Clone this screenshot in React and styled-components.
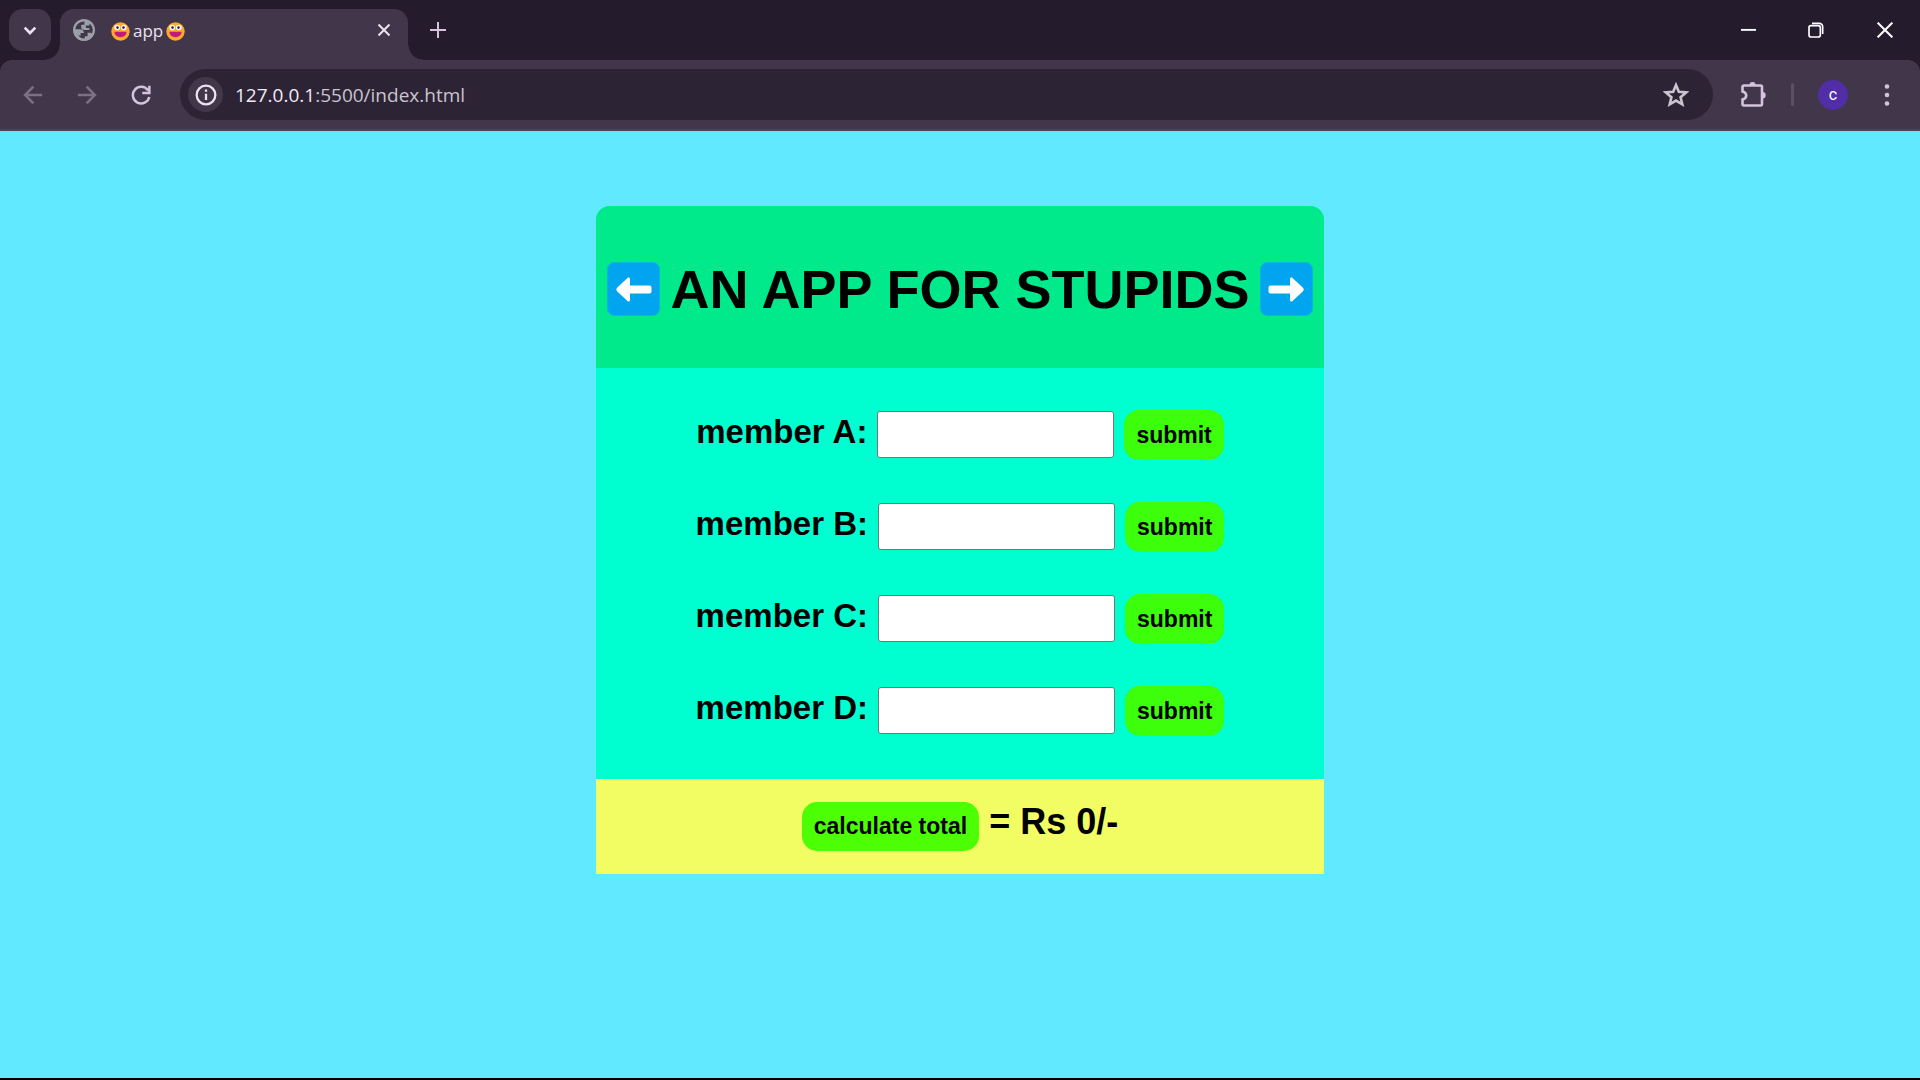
import React, { useState } from "react";
import styled, { createGlobalStyle } from "styled-components";

const GlobalStyle = createGlobalStyle`
  *, *::before, *::after { box-sizing: border-box; }
  html, body { margin: 0; height: 100%; }
  body { font-family: "Liberation Sans", Arial, sans-serif; background: #000; overflow: hidden; }
  button { border: 0; padding: 0; margin: 0; background: none; color: inherit; font: inherit; cursor: pointer; }
  svg { display: block; }
`;

const Window = styled.div`
  display: flex;
  flex-direction: column;
  height: 100vh;
  padding-bottom: 2px;
`;

const TabStrip = styled.header`
  display: flex;
  align-items: flex-start;
  height: 60px;
  padding: 9px 0 0 9px;
  background: #241b2d;
  color: #fff;
`;

const IconButton = styled.button`
  display: grid;
  place-items: center;
  flex: none;
  width: ${(p) => p.$width || 42}px;
  height: 42px;
  border-radius: 14px;
  background: ${(p) => p.$fill || "transparent"};
  color: ${(p) => p.$color || "#d3c3dc"};
`;

const Tab = styled.div`
  position: relative;
  display: flex;
  align-items: center;
  width: 348px;
  height: 51px;
  margin: 0 9px;
  padding: 0 3px 9px 13px;
  border-radius: 14px 14px 0 0;
  background: #42374a;
  &::before, &::after {
    content: "";
    position: absolute;
    bottom: 0;
    width: 15px;
    height: 15px;
  }
  &::before { right: 100%; background: radial-gradient(circle at 0 0, transparent 14px, #42374a 15px); }
  &::after { left: 100%; background: radial-gradient(circle at 100% 0, transparent 14px, #42374a 15px); }
`;

const TabTitle = styled.span`
  display: flex;
  flex: 1;
  align-items: center;
  gap: 3px;
  padding: 2px 0 0 16px;
  font: 17px/24px "Open Sans", "Noto Sans", sans-serif;
  color: #ebe2ef;
`;

const WindowControls = styled.div`
  display: flex;
  margin-left: auto;
  padding-right: 1px;
`;

const ToolbarBack = styled.div`
  background: #241b2d;
`;

const Toolbar = styled.nav`
  display: flex;
  align-items: center;
  gap: 12px;
  height: 71px;
  padding: 0 12px;
  border-bottom: 2px solid #4b444f;
  border-radius: 12px 12px 0 0;
  background: #42374a;
`;

const AddressBar = styled.div`
  display: flex;
  flex: 1;
  align-items: center;
  height: 51px;
  margin: 0 8px 0 6px;
  padding: 0 16px 0 8px;
  border-radius: 26px;
  background: #2c2335;
`;

const SiteInfo = styled.button`
  display: grid;
  place-items: center;
  flex: none;
  width: 35px;
  height: 35px;
  border-radius: 50%;
  background: #42374a;
  color: #ebe2ef;
`;

const Address = styled.a`
  flex: 1;
  padding-left: 12px;
  font: 19px/28px "Open Sans", "Noto Sans", sans-serif;
  color: #cbc4ce;
  text-decoration: none;
  strong { font-weight: 400; color: #f1e9f5; }
`;

const Divider = styled.span`
  width: 3px;
  height: 23px;
  margin: 0 12px 0 6px;
  border-radius: 2px;
  background: #5c5068;
`;

const Avatar = styled.button`
  width: 30px;
  height: 30px;
  margin-right: 6px;
  border-radius: 50%;
  background: #512da8;
  color: #fff;
  font: 400 16px/30px Roboto, sans-serif;
`;

const Page = styled.main`
  display: flex;
  flex: 1;
  align-items: flex-start;
  justify-content: center;
  padding-top: 75px;
  background: #61eaff;
`;

const Card = styled.section`
  width: 728px;
  overflow: hidden;
  border-radius: 14px 14px 0 0;
  background: #00ffd0;
  color: #000;
`;

const CardHeader = styled.div`
  display: flex;
  align-items: center;
  justify-content: space-between;
  padding: 52px 11px 48px;
  background: #00e98b;
`;

const Title = styled.h1`
  margin: 0;
  font-size: 54px;
  line-height: 62px;
  white-space: nowrap;
`;

const Members = styled.div`
  display: flex;
  flex-direction: column;
  gap: 42px;
  padding: 42px 0 43px;
`;

const MemberRow = styled.form`
  display: flex;
  align-items: flex-start;
  justify-content: center;
  gap: 10px;
`;

const MemberLabel = styled.label`
  font-size: 33px;
  font-weight: 700;
  line-height: 44px;
`;

const MemberInput = styled.input`
  width: 237px;
  height: 47px;
  margin: 1px 0 0;
  padding: 2px 6px;
  border: 1px solid #767676;
  border-radius: 3px;
  background: #fff;
  font: 24px "Liberation Sans", Arial, sans-serif;
`;

const PillButton = styled.button`
  height: 49px;
  padding: 0 12px;
  border-radius: 15px;
  background: ${(p) => p.$fill};
  color: #000;
  font-size: 23px;
  font-weight: 700;
  ${MemberRow} & { height: 50px; }
`;

const TotalBar = styled.div`
  display: flex;
  align-items: flex-start;
  justify-content: center;
  gap: 10px;
  padding: 23px 0;
  background: #f1fd63;
`;

const Total = styled.output`
  font-size: 36px;
  font-weight: 700;
  line-height: 40px;
`;

const Stroke = ({ size = 24, width = 2, children }) => (
  <svg width={size} height={size} viewBox="0 0 24 24" fill="none" stroke="currentColor" strokeWidth={width} aria-hidden="true">
    {children}
  </svg>
);

const Grin = () => (
  <svg width="19" height="19" viewBox="0 0 19 19" aria-hidden="true">
    <circle cx="9.5" cy="9.5" r="9.2" fill="#ffa82b" />
    <path d="M3.5 9.800h12c0 3.400-2.600 5.400-6 5.400s-6-2-6-5.400z" fill="#bf1b7c" />
    <circle cx="6.200" cy="5.500" r="2.800" fill="#fff" />
    <circle cx="12.800" cy="5.500" r="2.800" fill="#fff" />
    <circle cx="6.500" cy="5.600" r="1.300" fill="#33233c" />
    <circle cx="12.500" cy="5.600" r="1.300" fill="#33233c" />
  </svg>
);

const Globe = () => (
  <svg width="22" height="22" viewBox="0 0 22 22" aria-hidden="true">
    <circle cx="11" cy="11" r="10.800" fill="#9aa0a6" />
    <path
      d="M11.500 2.200C6.500 2 2.400 5.800 2.200 10.300h4.500c2.600 0 4.300 1.400 4.300 3.700h-3.400v2.400H5.300c1.600 2 3.900 3.300 6.500 3.100v-2.300h2.800v-3.400h2.200c1.400 0 2.300.6 2.700 1.200 1.600-4.100 0-8.200-2.800-10.400l-.5 2h-3.300v2.300h3.400v2.200h-4.600c-2.400 0-3.500-1.300-3.500-3V5.800h3.200z"
      fill="#42374a"
    />
    <circle cx="11" cy="11" r="9.800" fill="none" stroke="#9aa0a6" strokeWidth="2" />
  </svg>
);

const ArrowTile = ({ right }) => (
  <svg width="53" height="54" viewBox="0 0 53 54" role="img" aria-label={right ? "right" : "left"}>
    <rect x="0.500" y="0.500" width="52" height="53" rx="7" fill="#00a4ef" stroke="#12b3dc" />
    <path
      transform={right ? "translate(53 0) scale(-1 1)" : undefined}
      d="M10 25.800L20.500 16c1-.8 2.500-.3 2.500 1v6.500H42.500q2 0 2 2v4q0 2-2 2H23V38c0 1.500-1.500 2-2.500 1L10 29.300q-1.500-1.700 0-3.500z"
      fill="#fff"
    />
  </svg>
);

const MEMBERS = ["A", "B", "C", "D"];

export default function App() {
  const [amounts, setAmounts] = useState({});
  const [total, setTotal] = useState(0);

  const calculate = () =>
    setTotal(MEMBERS.reduce((sum, m) => sum + (Number(amounts[m]) || 0), 0));

  return (
    <Window>
      <GlobalStyle />
      <TabStrip>
        <IconButton $fill="#42374a" $color="#ebe2ef" aria-label="Search tabs">
          <Stroke width={4} size={16}><path d="M4 8.500l8 8 8-8" /></Stroke>
        </IconButton>
        <Tab>
          <Globe />
          <TabTitle><Grin />app<Grin /></TabTitle>
          <IconButton $color="#ebe2ef" aria-label="Close tab">
            <Stroke size={12} width={4}><path d="M1 1l22 22M23 1L1 23" /></Stroke>
          </IconButton>
        </Tab>
        <IconButton aria-label="New tab">
          <Stroke size={16} width={3}><path d="M12 0v24M0 12h24" /></Stroke>
        </IconButton>
        <WindowControls>
          <IconButton $width={68} $color="#fff" aria-label="Minimize">
            <Stroke size={15} width={3}><path d="M0 11h24" /></Stroke>
          </IconButton>
          <IconButton $width={68} $color="#fff" aria-label="Restore">
            <Stroke size={16} width={2.500}>
              <rect x="1.500" y="5.500" width="17" height="17" rx="3" />
              <path d="M6 2h11a5 5 0 0 1 5 5v11" />
            </Stroke>
          </IconButton>
          <IconButton $width={69} $color="#fff" aria-label="Close">
            <Stroke size={16} width={3}><path d="M1 1l22 22M23 1L1 23" /></Stroke>
          </IconButton>
        </WindowControls>
      </TabStrip>

      <ToolbarBack>
        <Toolbar>
          <IconButton $color="#7c7084" aria-label="Back">
            <Stroke size={20} width={3}><path d="M23 12H3M12.500 2L2.500 12l10 10" /></Stroke>
          </IconButton>
          <IconButton $color="#7c7084" aria-label="Forward">
            <Stroke size={20} width={3}><path d="M1 12h20M11.500 2l10 10-10 10" /></Stroke>
          </IconButton>
          <IconButton aria-label="Reload">
            <Stroke size={20} width={3}>
              <path d="M20.500 6.500A10 10 0 1 0 22 14.500M22 1v8.500h-8.500" />
            </Stroke>
          </IconButton>
          <AddressBar>
            <SiteInfo aria-label="Site information">
              <Stroke size={22} width={2.500}>
                <circle cx="12" cy="12" r="10.200" />
                <path d="M12 10.500v7M12 6v2.500" />
              </Stroke>
            </SiteInfo>
            <Address href="#"><strong>127.0.0.1</strong>:5500/index.html</Address>
            <IconButton $color="#cbc4ce" aria-label="Bookmark">
              <Stroke size={26} width={2.400}>
                <path d="M12 2.800l2.600 6.200 6.800.6-5.200 4.400 1.600 6.600-5.800-3.500-5.800 3.500 1.600-6.600-5.200-4.400 6.800-.6z" />
              </Stroke>
            </IconButton>
          </AddressBar>
          <IconButton $width={40} aria-label="Extensions">
            <svg width="26" height="26" viewBox="0 1 26 26" aria-hidden="true">
              <path
                d="M4 4.500h16.500q1.500 0 1.500 1.500v17q0 1.500-1.500 1.500H4q-1.500 0-1.500-1.500v-4.500c5-1.500 5-6.500 0-8V6q0-1.500 1.500-1.500z"
                fill="none" stroke="currentColor" strokeWidth="2.600"
              />
              <path d="M9.500 4a3 3 0 0 1 6 0zM22.500 11a3.200 3.200 0 0 1 0 6.400z" fill="currentColor" />
            </svg>
          </IconButton>
          <Divider />
          <Avatar aria-label="Profile">c</Avatar>
          <IconButton aria-label="Menu">
            <svg width="6" height="22" viewBox="0 0 6 22" fill="currentColor" aria-hidden="true">
              <circle cx="3" cy="2.500" r="2.300" />
              <circle cx="3" cy="11" r="2.300" />
              <circle cx="3" cy="19.500" r="2.300" />
            </svg>
          </IconButton>
        </Toolbar>
      </ToolbarBack>

      <Page>
        <Card>
          <CardHeader>
            <ArrowTile />
            <Title>AN APP FOR STUPIDS</Title>
            <ArrowTile right />
          </CardHeader>
          <Members>
            {MEMBERS.map((m) => (
              <MemberRow key={m} onSubmit={(e) => e.preventDefault()}>
                <MemberLabel htmlFor={`member-${m}`}>member {m}:</MemberLabel>
                <MemberInput
                  id={`member-${m}`}
                  value={amounts[m] || ""}
                  onChange={(e) => setAmounts({ ...amounts, [m]: e.target.value })}
                />
                <PillButton $fill="#3dff0c" type="submit">submit</PillButton>
              </MemberRow>
            ))}
          </Members>
          <TotalBar>
            <PillButton $fill="#4cff05" type="button" onClick={calculate}>calculate total</PillButton>
            <Total>= Rs {total}/-</Total>
          </TotalBar>
        </Card>
      </Page>
    </Window>
  );
}
